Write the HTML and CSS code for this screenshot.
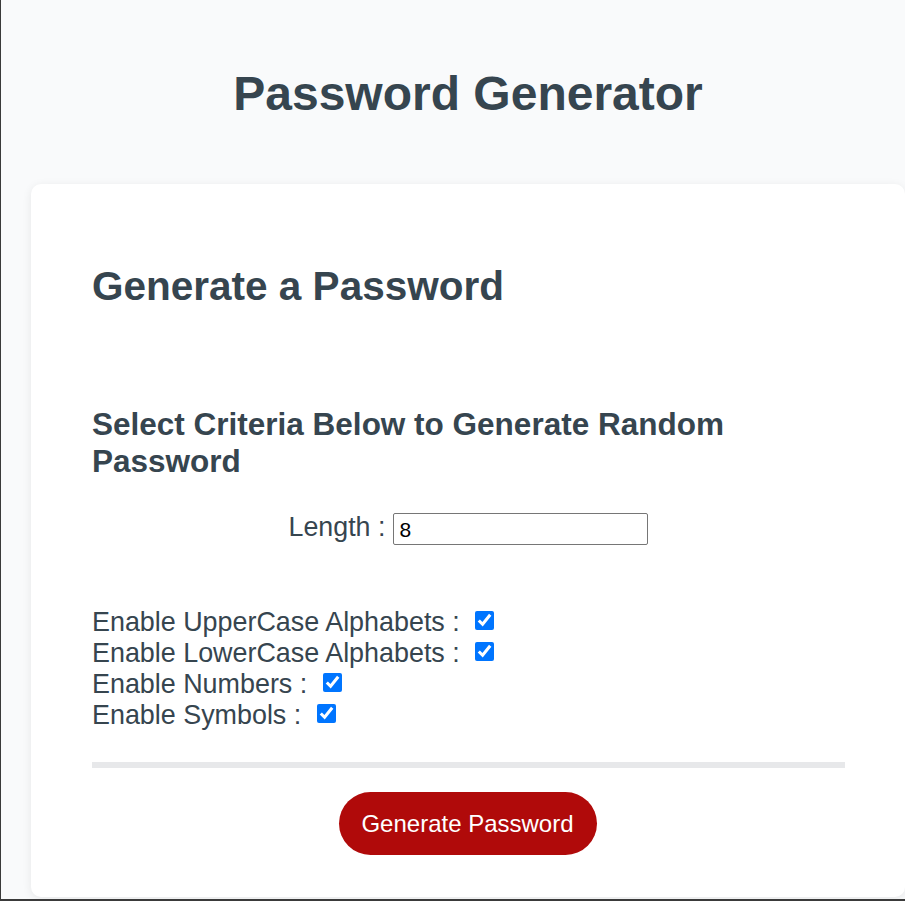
FILE: index.html
```html
<!DOCTYPE html>
<html lang="en">
<head>
<meta charset="utf-8">
<title>Password Generator</title>
<link rel="stylesheet" href="styles.css">
</head>
<body>
  <div class="page">
    <h1 class="title">Password Generator</h1>
    <main class="card">
      <h2 class="card-title">Generate a Password</h2>
      <h3 class="criteria">Select Criteria Below to Generate Random Password</h3>
      <div class="length-row">
        <label class="length-label" for="length">Length :</label>
        <input class="length-input" id="length" type="text" value="8">
      </div>
      <div class="options">
        <div class="option">Enable UpperCase Alphabets : <input class="check" type="checkbox" checked></div>
        <div class="option">Enable LowerCase Alphabets : <input class="check" type="checkbox" checked></div>
        <div class="option">Enable Numbers : <input class="check" type="checkbox" checked></div>
        <div class="option">Enable Symbols : <input class="check" type="checkbox" checked></div>
      </div>
      <div class="divider"></div>
      <div class="actions">
        <button class="generate" type="button">Generate Password</button>
      </div>
    </main>
  </div>
</body>
</html>
```

FILE: styles.css
```css
html {
  height: 100%;
}

body {
  margin: 0;
  height: 100%;
  box-sizing: border-box;
  background: #f9fafb;
  border-left: 1px solid #3a3a3a;
  border-bottom: 2px solid #3a3a3a;
  overflow: hidden;
  font-family: "Liberation Sans", Arial, sans-serif;
  color: #36454f;
}

.page {
  width: 874px;
  padding: 66px 30px 0 30px;
}

.title {
  margin: 0;
  font-size: 48px;
  line-height: 55px;
  font-weight: 700;
  text-align: center;
}

.card {
  display: block;
  margin-top: 63px;
  background: #ffffff;
  border-radius: 10px;
  box-shadow: 0 2px 10px rgba(0, 0, 0, 0.08);
  padding: 80px 60px 42px 61px;
}

.card-title {
  margin: 0;
  font-size: 40.5px;
  line-height: 44px;
  font-weight: 700;
}

.criteria {
  margin: 98px 0 0 0;
  font-size: 31.5px;
  line-height: 37px;
  font-weight: 700;
}

.length-row {
  margin-top: 33px;
  display: flex;
  justify-content: center;
  align-items: center;
  gap: 8px;
}

.length-label {
  font-size: 26.8px;
  line-height: 28px;
  margin-bottom: 4px;
}

.length-input {
  box-sizing: border-box;
  width: 255px;
  height: 32px;
  margin: 0;
  padding: 1px 5px 0;
  border: 1px solid #767676;
  border-radius: 2px;
  font-family: "Liberation Sans", Arial, sans-serif;
  font-size: 21px;
  color: #000;
}

.options {
  margin-top: 62px;
}

.option {
  font-size: 26.9px;
  line-height: 31px;
}

.check {
  width: 19px;
  height: 19px;
  margin: 0 0 0 8px;
  vertical-align: 1px;
  accent-color: #0075ff;
}

.divider {
  margin-top: 31px;
  height: 6px;
  background: #e7e8ea;
}

.actions {
  margin-top: 24px;
  display: flex;
  justify-content: center;
}

.generate {
  box-sizing: border-box;
  width: 258px;
  height: 63px;
  margin-left: -2px;
  border: none;
  border-radius: 32px;
  background: #b00a0a;
  color: #ffffff;
  font-family: "Liberation Sans", Arial, sans-serif;
  font-size: 24px;
  cursor: pointer;
}
```
